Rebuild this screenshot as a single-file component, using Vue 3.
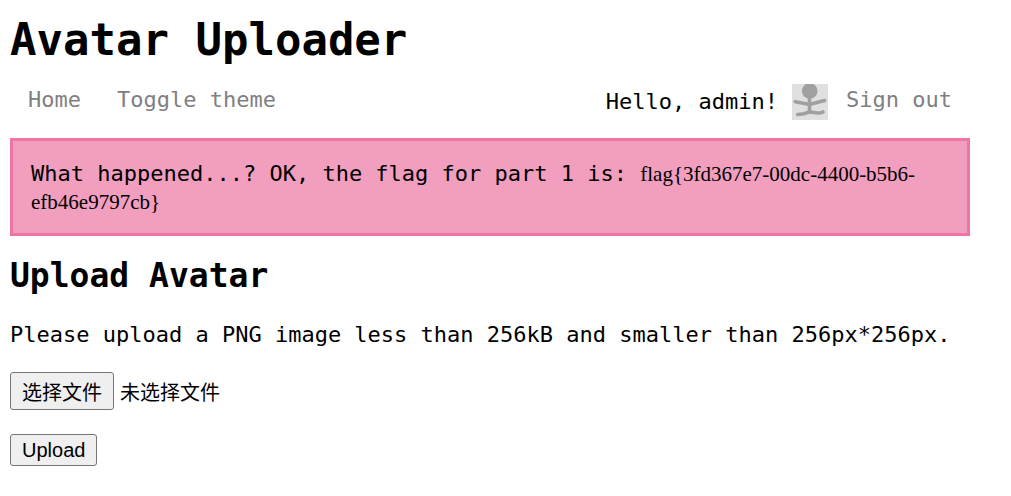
<script setup>
import { ref } from 'vue'

const fileName = ref('未选择文件')

function onPick(event) {
  const file = event.target.files[0]
  fileName.value = file ? file.name : '未选择文件'
}
</script>

<template>
  <div class="page">
    <h1>Avatar Uploader</h1>

    <nav class="nav">
      <a class="link" href="#">Home</a>
      <a class="link" href="#">Toggle theme</a>
      <span class="user">
        <span class="hello">Hello, admin!</span>
        <svg class="avatar" viewBox="0 0 36 36" role="img" aria-label="Avatar">
          <rect width="36" height="36" fill="#e0e0e0" />
          <g fill="none" stroke="#a0a0a0" stroke-width="3.6" stroke-linecap="round" stroke-linejoin="round">
            <path d="M17.5 12V28.5" />
            <path d="M3.2 17.7L10 19L17.5 20.6L25 18.5L32.6 16.5" />
            <path d="M5.7 30.5L12 29.8L17.5 27.9L24 28.7Q28 29.5 31 28" />
          </g>
          <circle cx="17.7" cy="7" r="7.8" fill="#a0a0a0" />
        </svg>
      </span>
      <a class="link" href="#">Sign out</a>
    </nav>

    <div class="flash">
      What happened...? OK, the flag for part 1 is:
      <code>flag{3fd367e7-00dc-4400-b5b6-efb46e9797cb}</code>
    </div>

    <h2>Upload Avatar</h2>
    <p>Please upload a PNG image less than 256kB and smaller than 256px*256px.</p>

    <form @submit.prevent>
      <div class="picker">
        <input id="avatar-file" class="file" type="file" accept="image/png" @change="onPick" />
        <label class="choose" for="avatar-file">选择文件</label>
        <span class="name">{{ fileName }}</span>
      </div>
      <button class="upload" type="submit">Upload</button>
    </form>
  </div>
</template>

<style>
body {
  margin: 0;
  background: #fff;
}
</style>

<style scoped>
.page {
  box-sizing: border-box;
  max-width: 980px;
  padding: 10px;
  color: #000;
  font: 22px/28px "DejaVu Sans Mono", "Noto Sans CJK SC", monospace;
}

h1 {
  margin: 0;
  font-size: 44px;
  line-height: 60px;
}

.nav {
  display: flex;
  align-items: center;
  margin: 10px 0 14px;
  height: 44px;
}

.link {
  padding: 0 18px;
  margin-bottom: 4px;
  color: #808080;
  text-decoration: none;
}

.user {
  display: flex;
  align-items: center;
  gap: 14px;
  margin-left: auto;
}

.avatar {
  display: block;
  width: 36px;
  height: 36px;
}

.flash {
  padding: 19px 18px 17px;
  border: 3px solid #ef75a5;
  background: #f29ebf;
}

code {
  font: 21px/28px "Liberation Serif", serif;
}

h2 {
  margin: 18px 0 23px;
  font-size: 33px;
  line-height: 44px;
}

p {
  margin: 0 0 23px;
}

.picker {
  position: relative;
  display: flex;
  align-items: center;
  gap: 6px;
  margin-bottom: 24px;
  font: 20px/28px "Liberation Sans", "Noto Sans CJK SC", sans-serif;
}

.file {
  position: absolute;
  width: 1px;
  height: 1px;
  opacity: 0;
}

.choose,
.upload {
  border: 1px solid #767676;
  border-radius: 3px;
  background: #efefef;
  color: #000;
}

.choose {
  padding: 6px 11px 2px;
}

.name {
  padding-top: 4px;
}

.upload {
  display: block;
  padding: 3px 11px;
  font: 20px/24px "Liberation Sans", sans-serif;
}
</style>
